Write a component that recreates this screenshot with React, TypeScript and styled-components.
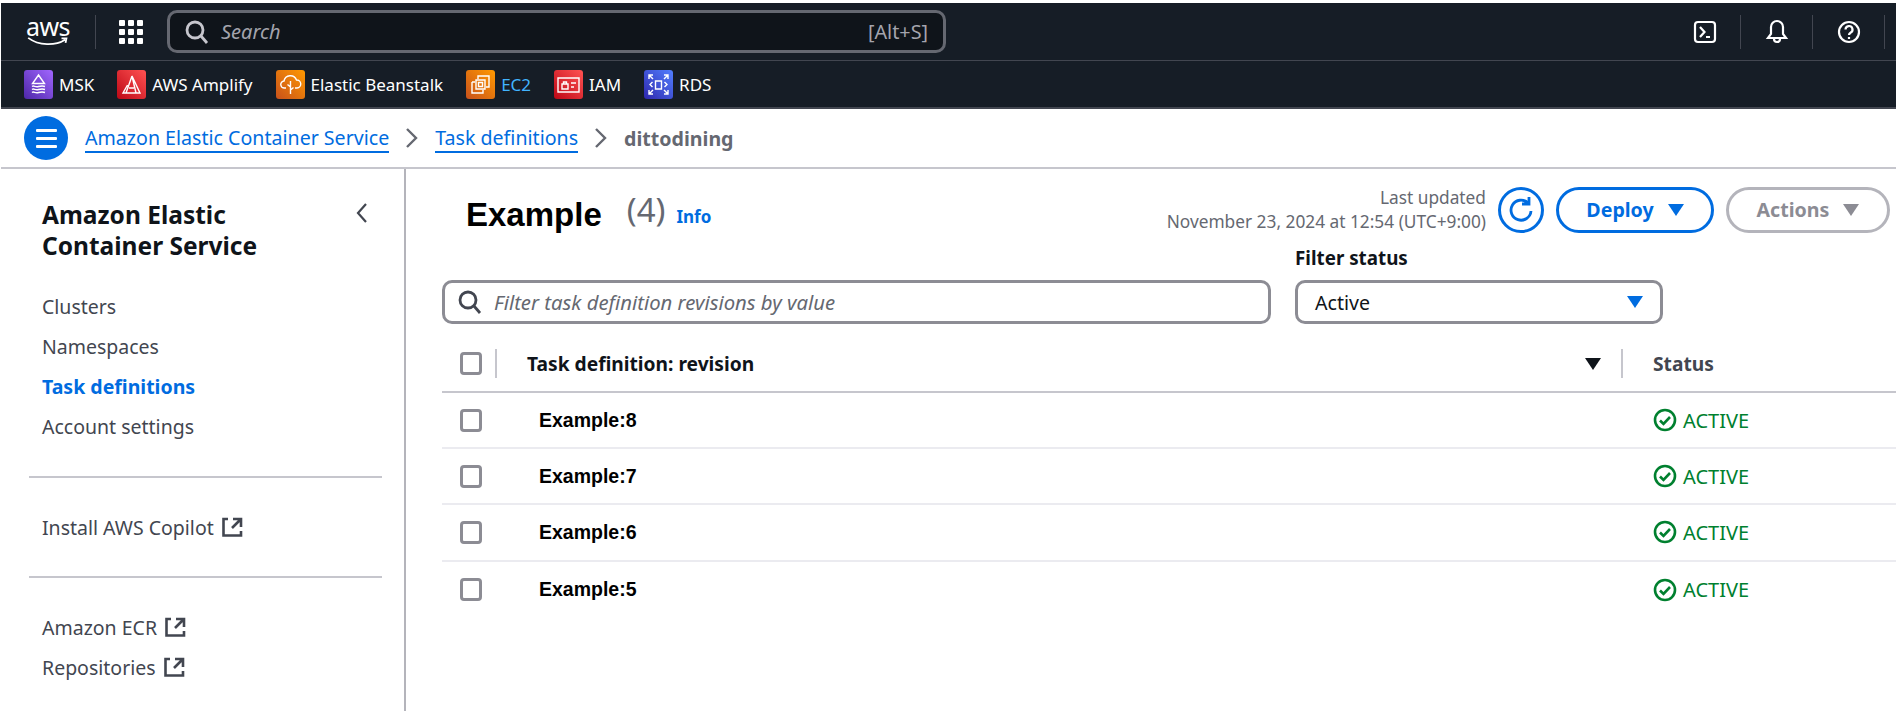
import React, { FC, ReactNode } from "react";
import styled, { createGlobalStyle } from "styled-components";

const GlobalStyle = createGlobalStyle`
  html, body {
    margin: 0;
    padding: 0;
    background: #ffffff;
    overflow: hidden;
  }
  body {
    font-family: "Noto Sans", "Open Sans", sans-serif;
    color: #0f141a;
  }
  * { box-sizing: border-box; }
`;

const Page = styled.div`
  width: 1903px;
  height: 711px;
  padding: 3px 7px 0 1px;
  overflow: hidden;
`;

const TopBar = styled.div`
  height: 58px;
  background: #161d26;
  border-bottom: 1px solid #424650;
  display: flex;
  align-items: center;
  padding-left: 24px;
`;

const Logo = styled.div`
  width: 46px;
  height: 32px;
  color: #ffffff;
  display: flex;
  flex-direction: column;
  align-items: center;
  font-family: "Noto Sans", sans-serif;
  font-size: 25px;
  line-height: 24px;
  letter-spacing: -0.5px;
  margin-top: -3px;
  svg { margin-top: -1px; }
`;

const BarDivider = styled.div<{ $ml: number }>`
  width: 1px;
  height: 34px;
  background: #424650;
  margin-left: ${(p) => p.$ml}px;
`;

const Waffle = styled.div`
  display: grid;
  grid-template-columns: repeat(3, 6px);
  grid-auto-rows: 6px;
  gap: 3px;
  margin-left: 23px;
  span {
    background: #ffffff;
    border-radius: 1px;
  }
`;

const SearchBox = styled.div`
  width: 779px;
  height: 43px;
  margin-left: 24px;
  background: #0f141a;
  border: 3px solid #656871;
  border-radius: 10px;
  display: flex;
  align-items: center;
  padding: 0 15px 0 15px;
  color: #a4a4ad;
  font-size: 20px;
  font-style: italic;
`;

const SearchHint = styled.span`
  margin-left: auto;
  font-style: normal;
  font-size: 19.8px;
  color: #a4a4ad;
`;

const SearchText = styled.span`
  margin-left: 12px;
`;

const BarIcons = styled.div`
  margin-left: auto;
  display: flex;
  align-items: center;
  margin-right: 11px;
`;

const BarIcon = styled.div`
  width: 72px;
  height: 34px;
  display: flex;
  align-items: center;
  justify-content: center;
  border-right: 1px solid #424650;
  color: #ffffff;
`;

const ShortcutBar = styled.div`
  height: 48px;
  background: #161d26;
  border-bottom: 2px solid #424650;
  display: flex;
  align-items: center;
  padding-left: 23px;
  gap: 23px;
`;

const Shortcut = styled.div<{ $accent?: boolean }>`
  display: flex;
  align-items: center;
  gap: 6px;
  font-size: 17px;
  color: ${(p) => (p.$accent ? "#42b4ff" : "#ffffff")};
`;

const ServiceIcon = styled.span<{ $from: string; $to: string }>`
  width: 29px;
  height: 29px;
  border-radius: 3px;
  display: flex;
  align-items: center;
  justify-content: center;
  background: linear-gradient(45deg, ${(p) => p.$from}, ${(p) => p.$to});
`;

const Crumbs = styled.div`
  height: 60px;
  border-bottom: 2px solid #c6c6cd;
  display: flex;
  align-items: center;
  padding-left: 23px;
`;

const MenuButton = styled.div`
  width: 44px;
  height: 44px;
  border-radius: 50%;
  background: #006ce0;
  display: flex;
  flex-direction: column;
  align-items: center;
  justify-content: center;
  gap: 5px;
  margin-right: 17px;
  span {
    width: 21px;
    height: 3px;
    border-radius: 1px;
    background: #ffffff;
  }
`;

const CrumbLink = styled.span`
  font-size: 19.6px;
  line-height: 27px;
  color: #006ce0;
  border-bottom: 2px solid #006ce0;
`;

const CrumbSep = styled.span`
  width: 46px;
  display: flex;
  justify-content: center;
  color: #656871;
`;

const CrumbCurrent = styled.span`
  font-size: 19.6px;
  font-weight: 700;
  color: #656871;
`;

const Body = styled.div`
  display: flex;
  height: 543px;
`;

const Sidebar = styled.aside`
  width: 405px;
  border-right: 2px solid #b4b4bb;
  padding: 30px 22px 0 28px;
  flex-shrink: 0;
`;

const SideHeader = styled.div`
  display: flex;
  justify-content: space-between;
  padding-left: 13px;
  margin-bottom: 25px;
`;

const SideTitle = styled.div`
  font-size: 24.5px;
  font-weight: 700;
  line-height: 31px;
  color: #0f141a;
`;

const Collapse = styled.div`
  margin: 3px 13px 0 0;
  color: #424650;
`;

const SideItem = styled.div<{ $active?: boolean }>`
  height: 40px;
  padding-left: 13px;
  display: flex;
  align-items: center;
  gap: 7px;
  font-size: 19.5px;
  font-weight: ${(p) => (p.$active ? 700 : 400)};
  color: ${(p) => (p.$active ? "#006ce0" : "#424650")};
`;

const SideRule = styled.hr<{ $mt: number }>`
  border: 0;
  height: 2px;
  background: #c6c6cd;
  margin: ${(p) => p.$mt}px 0 29px;
`;

const Main = styled.main`
  flex: 1;
  padding: 18px 0 0 36px;
`;

const Header = styled.div`
  height: 45px;
  padding-left: 24px;
  display: flex;
  align-items: center;
`;

const Title = styled.h1`
  margin: 11px 0 0;
  font-family: "Liberation Sans", Arial, sans-serif;
  font-size: 33px;
  font-weight: 700;
  color: #000000;
`;

const Count = styled.span`
  margin-left: 25px;
  font-size: 33px;
  color: #656871;
`;

const InfoLink = styled.span`
  margin: 13px 0 0 11px;
  font-size: 17px;
  font-weight: 700;
  color: #006ce0;
`;

const Updated = styled.div`
  margin-left: auto;
  text-align: right;
  font-size: 17.3px;
  line-height: 24px;
  color: #656871;
`;

const RefreshButton = styled.div`
  width: 46px;
  height: 46px;
  margin-left: 12px;
  border: 3px solid #006ce0;
  border-radius: 50%;
  display: flex;
  align-items: center;
  justify-content: center;
  color: #006ce0;
`;

const PillButton = styled.div<{ $muted?: boolean; $width: number }>`
  width: ${(p) => p.$width}px;
  height: 46px;
  margin-left: 12px;
  border: 3px solid ${(p) => (p.$muted ? "#b4b4bb" : "#006ce0")};
  border-radius: 23px;
  display: flex;
  align-items: center;
  justify-content: center;
  gap: 14px;
  font-size: 19.6px;
  font-weight: 700;
  color: ${(p) => (p.$muted ? "#8c8c94" : "#006ce0")};
`;

const Actions = styled.div`
  display: flex;
  align-items: center;
  margin-right: 6px;
`;

const Filters = styled.div`
  display: grid;
  grid-template-columns: 829px 368px;
  column-gap: 24px;
  align-items: end;
  margin-top: 15px;
`;

const FieldLabel = styled.div`
  font-size: 18.8px;
  font-weight: 700;
  line-height: 22px;
  margin-bottom: 11px;
  color: #0f141a;
`;

const Field = styled.div`
  height: 44px;
  border: 3px solid #8c8c94;
  border-radius: 10px;
  display: flex;
  align-items: center;
  padding: 0 17px 0 17px;
  font-size: 19.6px;
`;

const FilterSearch = styled(Field)`
  padding-left: 13px;
`;

const FilterText = styled.span`
  margin-left: 12px;
  font-size: 20.3px;
  font-style: italic;
  color: #656871;
`;

const SelectCaret = styled.span`
  margin-left: auto;
  display: flex;
`;

const TableRow = styled.div<{ $head?: boolean; $last?: boolean }>`
  display: grid;
  grid-template-columns: 55px 1126px 1fr;
  height: ${(p) => (p.$head ? 62 : 56.2)}px;
  margin-top: ${(p) => (p.$head ? 7 : 0)}px;
  padding-top: ${(p) => (p.$head ? 5 : 0)}px;
  align-items: center;
  border-bottom: ${(p) =>
    p.$last ? "none" : p.$head ? "2px solid #c6c6cd" : "2px solid #ebebf0"};
`;

const CheckCell = styled.div<{ $divider?: boolean }>`
  height: 29px;
  padding-left: 18px;
  display: flex;
  align-items: center;
  border-right: ${(p) => (p.$divider ? "2px solid #c6c6cd" : "none")};
`;

const CheckBox = styled.span`
  width: 22px;
  height: 23px;
  border: 3px solid #8c8c94;
  border-radius: 4px;
`;

const HeadCell = styled.div`
  height: 29px;
  padding: 0 20px 0 30px;
  border-right: 2px solid #c6c6cd;
  display: flex;
  align-items: center;
  justify-content: space-between;
  font-size: 19.2px;
  font-weight: 700;
  color: #0f141a;
`;

const StatusHead = styled.div`
  padding-left: 30px;
  font-size: 19.2px;
  font-weight: 700;
  color: #424650;
`;

const NameCell = styled.div`
  padding-left: 42px;
  font-family: "Liberation Sans", Arial, sans-serif;
  font-size: 19.5px;
  font-weight: 700;
  color: #000000;
`;

const StatusCell = styled.div`
  padding-left: 30px;
  display: flex;
  align-items: center;
  gap: 6px;
  font-size: 20px;
  color: #00802f;
`;

const External: FC = () => (
  <svg width="22" height="22" viewBox="0 0 22 22" fill="none" stroke="#424650" strokeWidth="2.6">
    <path d="M7 3H2.500v16.500H20V15M12 3h8v8M20 3l-9 9" />
  </svg>
);

const Caret: FC<{ color: string }> = ({ color }) => (
  <svg width="16" height="14" viewBox="0 0 16 14">
    <path d="M0 1h16L8 13z" fill={color} />
  </svg>
);

const SearchGlyph: FC<{ color: string }> = ({ color }) => (
  <svg width="24" height="26" viewBox="0 0 24 26" fill="none" stroke={color} strokeWidth="2.8">
    <circle cx="10" cy="11" r="8" />
    <path d="M16 17l6 7" />
  </svg>
);

const CheckCircle: FC = () => (
  <svg width="24" height="24" viewBox="0 0 24 24" fill="none" stroke="#00802f" strokeWidth="2.6">
    <circle cx="12" cy="12" r="10" />
    <path d="M7 12.500l3.500 3.500L17 9" />
  </svg>
);

const Chevron: FC = () => (
  <svg width="14" height="22" viewBox="0 0 14 22" fill="none" stroke="currentColor" strokeWidth="2.400">
    <path d="M2 2l9 9-9 9" />
  </svg>
);

const shortcuts: { label: string; from: string; to: string; accent?: boolean; glyph: ReactNode }[] = [
  {
    label: "MSK",
    from: "#4d27a8",
    to: "#a166ff",
    glyph: (
      <path d="M14.500 5l6 8.500h-12zM8 16.500c2-1.500 3 1 6.500 0s4-1 6.500 0M8 19.500c2-1.500 3 1 6.500 0s4-1 6.500 0M8 22.500c2-1.500 3 1 6.500 0s4-1 6.500 0" />
    ),
  },
  {
    label: "AWS Amplify",
    from: "#bd0816",
    to: "#ff5252",
    glyph: <path d="M15 6l8 17H6l4.500-8M15 6L9 23M15 6l4 17M12 18h5" />,
  },
  {
    label: "Elastic Beanstalk",
    from: "#c8511b",
    to: "#ff9900",
    glyph: (
      <path d="M10 18H8.500a3.500 3.500 0 0 1-.5-7 6.500 6.500 0 0 1 12.500-1 4 4 0 0 1 .5 8H19M14.500 11v13M14.500 17l-3-2.500M14.500 20l3-2.500" />
    ),
  },
  {
    label: "EC2",
    from: "#c8511b",
    to: "#ff9900",
    accent: true,
    glyph: <path d="M12 9V6h11v11h-3M6 12h3M6 12v11h11v-3M10 10h9v9h-9zM12.500 12.500h4v4h-4z" />,
  },
  {
    label: "IAM",
    from: "#bd0816",
    to: "#ff5252",
    glyph: <path d="M4 8h21v14H4zM8 14h6v5H8zM9.500 14v-2h3v2M17 13h5M17 17h3" />,
  },
  {
    label: "RDS",
    from: "#2e27ad",
    to: "#527fff",
    glyph: (
      <path d="M11.500 11h6v8h-6zM5 9V5h4M24 9V5h-4M5 20v4h4M24 20v4h-4M5 5l4 4M24 5l-4 4M5 24l4-4M24 24l-4-4M8.500 12l-2.500 2.500L8.500 17M20.500 12l2.500 2.500L20.500 17" />
    ),
  },
];

const rows = ["Example:8", "Example:7", "Example:6", "Example:5"];

const App: FC = () => (
  <Page>
    <GlobalStyle />
    <TopBar>
      <Logo>
        aws
        <svg width="46" height="10" viewBox="0 0 46 10" fill="none" stroke="#ffffff" strokeWidth="2">
          <path d="M1 1c12 9 30 9 41 2M38 1.500l5.500 0-1 5" />
        </svg>
      </Logo>
      <BarDivider $ml={24} />
      <Waffle>
        {Array.from({ length: 9 }).map((_, i) => (
          <span key={i} />
        ))}
      </Waffle>
      <SearchBox>
        <SearchGlyph color="#c6c6cd" />
        <SearchText>Search</SearchText>
        <SearchHint>[Alt+S]</SearchHint>
      </SearchBox>
      <BarIcons>
        <BarIcon>
          <svg width="24" height="24" viewBox="0 0 24 24" fill="none" stroke="#ffffff" strokeWidth="2.2">
            <rect x="2" y="2" width="20" height="20" rx="3" />
            <path d="M7 7l4.500 5L7 17M13 17h4" />
          </svg>
        </BarIcon>
        <BarIcon>
          <svg width="24" height="26" viewBox="0 0 24 26" fill="none" stroke="#ffffff" strokeWidth="2.2">
            <path d="M12 2a6 6 0 0 0-6 6v7l-3 4h18l-3-4V8a6 6 0 0 0-6-6zM9 20a3 3 0 0 0 6 0" />
          </svg>
        </BarIcon>
        <BarIcon>
          <svg width="24" height="24" viewBox="0 0 24 24" fill="none" stroke="#ffffff" strokeWidth="2.2">
            <circle cx="12" cy="12" r="10" />
            <path d="M8.500 9.500a3.500 3.500 0 1 1 5 3.200c-1 .6-1.500 1.300-1.500 2.300M12 17v2" />
          </svg>
        </BarIcon>
      </BarIcons>
    </TopBar>
    <ShortcutBar>
      {shortcuts.map((s) => (
        <Shortcut key={s.label} $accent={s.accent}>
          <ServiceIcon $from={s.from} $to={s.to}>
            <svg width="29" height="29" viewBox="0 0 29 29" fill="none" stroke="#ffffff" strokeWidth="1.4">
              {s.glyph}
            </svg>
          </ServiceIcon>
          {s.label}
        </Shortcut>
      ))}
    </ShortcutBar>
    <Crumbs>
      <MenuButton>
        <span />
        <span />
        <span />
      </MenuButton>
      <CrumbLink>Amazon Elastic Container Service</CrumbLink>
      <CrumbSep>
        <Chevron />
      </CrumbSep>
      <CrumbLink>Task definitions</CrumbLink>
      <CrumbSep>
        <Chevron />
      </CrumbSep>
      <CrumbCurrent>dittodining</CrumbCurrent>
    </Crumbs>
    <Body>
      <Sidebar>
        <SideHeader>
          <SideTitle>
            Amazon Elastic
            <br />
            Container Service
          </SideTitle>
          <Collapse>
            <svg width="14" height="22" viewBox="0 0 14 22" fill="none" stroke="currentColor" strokeWidth="2.200">
              <path d="M11 2L3 11l8 9" />
            </svg>
          </Collapse>
        </SideHeader>
        <SideItem>Clusters</SideItem>
        <SideItem>Namespaces</SideItem>
        <SideItem $active>Task definitions</SideItem>
        <SideItem>Account settings</SideItem>
        <SideRule $mt={30} />
        <SideItem>
          Install AWS Copilot <External />
        </SideItem>
        <SideRule $mt={29} />
        <SideItem>
          Amazon ECR <External />
        </SideItem>
        <SideItem>
          Repositories <External />
        </SideItem>
      </Sidebar>
      <Main>
        <Header>
          <Title>Example</Title>
          <Count>(4)</Count>
          <InfoLink>Info</InfoLink>
          <Updated>
            Last updated
            <br />
            November 23, 2024 at 12:54 (UTC+9:00)
          </Updated>
          <Actions>
            <RefreshButton>
              <svg width="26" height="28" viewBox="0 0 26 28" fill="none" stroke="currentColor" strokeWidth="2.800">
                <path d="M20 7a10 10 0 1 0 3 8M21 1v7h-7" />
              </svg>
            </RefreshButton>
            <PillButton $width={158}>
              Deploy <Caret color="#006ce0" />
            </PillButton>
            <PillButton $muted $width={164}>
              Actions <Caret color="#8c8c94" />
            </PillButton>
          </Actions>
        </Header>
        <Filters>
          <FilterSearch>
            <SearchGlyph color="#424650" />
            <FilterText>Filter task definition revisions by value</FilterText>
          </FilterSearch>
          <div>
            <FieldLabel>Filter status</FieldLabel>
            <Field>
              Active
              <SelectCaret>
                <Caret color="#006ce0" />
              </SelectCaret>
            </Field>
          </div>
        </Filters>
        <TableRow $head>
          <CheckCell $divider>
            <CheckBox />
          </CheckCell>
          <HeadCell>
            Task definition: revision
            <Caret color="#0f141a" />
          </HeadCell>
          <StatusHead>Status</StatusHead>
        </TableRow>
        {rows.map((name, i) => (
          <TableRow key={name} $last={i === rows.length - 1}>
            <CheckCell>
              <CheckBox />
            </CheckCell>
            <NameCell>{name}</NameCell>
            <StatusCell>
              <CheckCircle />
              ACTIVE
            </StatusCell>
          </TableRow>
        ))}
      </Main>
    </Body>
  </Page>
);

export default App;
